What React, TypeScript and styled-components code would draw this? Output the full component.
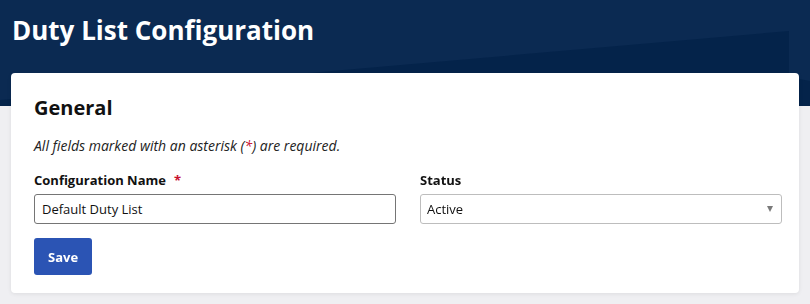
import { useEffect, useRef } from 'react';
import styled, { createGlobalStyle } from 'styled-components';

// Duty list configuration screen — header band with a card overlapping it.

const GlobalStyle = createGlobalStyle`
  html, body {
    margin: 0;
    padding: 0;
    background: #efeff2;
    font-family: 'Open Sans', 'Noto Sans', sans-serif;
  }
`;

const Page = styled.div`
  min-height: 100vh;
  background: #efeff2;
`;

const Header = styled.header`
  position: relative;
  height: 106px;
  padding: 12px 12px 0;
  box-sizing: border-box;
  background: #0b2a52;
  overflow: hidden;

  /* darker diagonal panels in the banner */
  &::before,
  &::after {
    content: '';
    position: absolute;
    inset: 0;
    background: #04234a;
  }
  &::before {
    clip-path: polygon(0 100px, 789px 31px, 789px 106px, 0 106px);
  }
  &::after {
    clip-path: polygon(789px 77px, 810px 81px, 810px 106px, 789px 106px);
  }
`;

const Title = styled.h1`
  position: relative;
  z-index: 1;
  margin: 0;
  font-size: 26px;
  line-height: 36px;
  font-weight: 700;
  color: #ffffff;
`;

const Card = styled.section`
  position: relative;
  z-index: 2;
  margin: -33px 11px 0;
  padding: 20px 17px 18px 23px;
  background: #ffffff;
  border-radius: 4px;
  box-shadow: 0 1px 4px rgba(0, 0, 0, 0.08);
`;

const SectionTitle = styled.h2`
  margin: 0;
  font-size: 20px;
  line-height: 30px;
  font-weight: 700;
  color: #111111;
`;

const Hint = styled.p`
  margin: 13px 0 0;
  font-size: 14px;
  line-height: 20px;
  font-style: italic;
  color: #222222;
`;

const Required = styled.span`
  color: #c8102e;
`;

const FieldGrid = styled.div`
  display: grid;
  grid-template-columns: 1fr 1fr;
  column-gap: 24px;
  margin-top: 15px;
`;

const Field = styled.div`
  display: flex;
  flex-direction: column;
  gap: 5px;
`;

const Label = styled.label`
  font-size: 13px;
  line-height: 18px;
  font-weight: 700;
  color: #111111;

  ${Required} {
    margin-left: 8px;
  }
`;

const TextInput = styled.input`
  box-sizing: border-box;
  height: 30px;
  width: 100%;
  padding: 0 7px;
  border: 1px solid #757575;
  border-radius: 3px;
  font-family: inherit;
  font-size: 13px;
  color: #111111;
  caret-color: #000000;
  outline: none;
`;

const SelectWrap = styled.div`
  position: relative;

  &::after {
    content: '';
    position: absolute;
    right: 9px;
    top: 12px;
    border-left: 3.5px solid transparent;
    border-right: 3.5px solid transparent;
    border-top: 6px solid #7a7a7a;
    pointer-events: none;
  }
`;

const Select = styled.select`
  box-sizing: border-box;
  height: 30px;
  width: 100%;
  padding: 0 6px;
  border: 1px solid #bdbdbd;
  border-radius: 3px;
  background: #ffffff;
  appearance: none;
  font-family: inherit;
  font-size: 13px;
  color: #111111;
  outline: none;
`;

const SaveButton = styled.button`
  margin-top: 14px;
  height: 37px;
  padding: 0 14px;
  border: none;
  border-radius: 3px;
  background: #2b54b4;
  color: #ffffff;
  font-family: inherit;
  font-size: 13px;
  font-weight: 700;
  cursor: pointer;
`;

export default function App() {
  const nameRef = useRef<HTMLInputElement>(null);

  // caret sits after the value, as in the focused field
  useEffect(() => {
    const el = nameRef.current;
    if (el) {
      el.focus();
      el.setSelectionRange(el.value.length, el.value.length);
    }
  }, []);

  return (
    <Page>
      <GlobalStyle />
      <Header>
        <Title>Duty List Configuration</Title>
      </Header>
      <Card>
        <SectionTitle>General</SectionTitle>
        <Hint>
          All fields marked with an asterisk (<Required>*</Required>) are required.
        </Hint>
        <FieldGrid>
          <Field>
            <Label htmlFor="config-name">
              Configuration Name<Required>*</Required>
            </Label>
            <TextInput id="config-name" ref={nameRef} defaultValue="Default Duty List" />
          </Field>
          <Field>
            <Label htmlFor="config-status">Status</Label>
            <SelectWrap>
              <Select id="config-status" defaultValue="Active">
                <option>Active</option>
                <option>Inactive</option>
              </Select>
            </SelectWrap>
          </Field>
        </FieldGrid>
        <SaveButton type="button">Save</SaveButton>
      </Card>
    </Page>
  );
}
